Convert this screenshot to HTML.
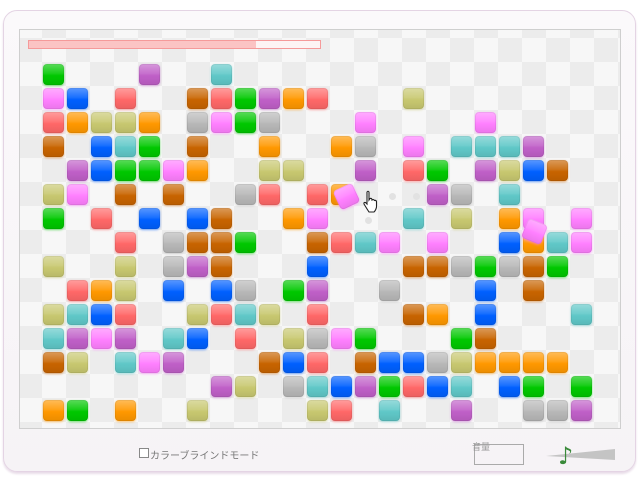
<!DOCTYPE html>
<html><head><meta charset="utf-8"><style>
html,body{margin:0;padding:0;}
body{width:640px;height:485px;background:#fff;position:relative;overflow:hidden;font-family:"Liberation Sans","Noto Sans CJK JP",sans-serif;}
#frame{position:absolute;left:3px;top:10px;width:631px;height:460px;border:1px solid #e4d4e4;border-radius:14px;background:linear-gradient(#fbf9fb,#f6f3f6);box-shadow:0 2px 2px #e8dce8;}
#board{position:absolute;left:19px;top:29px;width:600px;height:398px;border:1px solid #cfcfcf;
background-color:#f7f7f7;
background-image:conic-gradient(#ececec 25%,#f7f7f7 0 50%,#ececec 0 75%,#f7f7f7 0);
background-size:48px 48px;background-position:-2px 32px;overflow:hidden;}
.t{position:absolute;width:21px;height:21px;border-radius:4px;}
#bar{position:absolute;left:28px;top:40px;width:291px;height:7px;border:1px solid #f59a9a;background:linear-gradient(90deg,#fbc4c4 0 78%,#fdf4f4 78%);}
.dot{position:absolute;width:7px;height:7px;border-radius:50%;background:#e2e2e2;}
</style></head><body>
<div id="frame"></div>
<div id="board"></div>
<div id="bar"></div>
<div class="dot" style="left:389px;top:193px"></div>
<div class="dot" style="left:413px;top:193px"></div>
<div class="dot" style="left:365px;top:217px"></div>
<div id="tiles"></div>
<svg style="position:absolute;left:362px;top:190px" width="20" height="24" viewBox="0 0 20 24"><path d="M5 2 Q6 0.5 7 2 L7 10 L8 8.5 Q9.5 8 10 9.5 L10 10 Q11.5 9 12.5 10.5 Q14 10 14.5 11.5 L14.5 17 Q14 20 12 22 L7 22 Q5 19 2 14 Q1.5 12 3.5 12.5 L5 14 Z" fill="#fff" stroke="#222" stroke-width="1.1"/></svg>
<div style="position:absolute;left:139px;top:448px;width:8px;height:8px;border:1px solid #888;background:#fff"></div>
<div style="position:absolute;left:150px;top:447px;font-size:10px;color:#777;white-space:nowrap">カラーブラインドモード</div>
<div style="position:absolute;left:474px;top:444px;width:48px;height:19px;border:1px solid #aaa"></div>
<div style="position:absolute;left:472px;top:440px;font-size:9px;color:#999">音量</div>
<svg style="position:absolute;left:540px;top:440px" width="80" height="30"><polygon points="6,16 75,9 75,20" fill="#c4c4c4"/><text x="18" y="24" font-size="24" fill="#3a8a3a" font-family="DejaVu Sans">♪</text></svg>
<script>
var col={G:'#00c800',P:'#c060c8',K:'#ff80ff',B:'#0060ff',R:'#ff6868',O:'#ff9800',Y:'#c8c870',C:'#60c8c8',N:'#c86400',S:'#b8b8b8'};
var rows=["1G 5P 8C","1K 2B 4R 7N 8R 9G 10P 11O 12R 16Y","1R 2O 3Y 4Y 5O 7S 8K 9G 10S 14K 19K",
"1N 3B 4C 5G 7N 10O 13O 14S 16K 18C 19C 20C 21P","2P 3B 4G 5G 6K 7O 10Y 11Y 14P 16R 17G 19P 20Y 21B 22N",
"1Y 2K 4N 6N 9S 10R 12R 13O 17P 18S 20C","1G 3R 5B 7B 8N 11O 12K 16C 18Y 20O 21K 23K",
"4R 6S 7N 8N 9G 12N 13R 14C 15K 17K 20B 21O 22C 23K","1Y 4Y 6S 7P 8N 12B 16N 17N 18S 19G 20S 21N 22G",
"2R 3O 4Y 6B 8B 9S 11G 12P 15S 19B 21N","1Y 2C 3B 4R 7Y 8R 9C 10Y 12R 16N 17O 19B 23C",
"1C 2P 3K 4P 6C 7B 9R 11Y 12S 13K 14G 18G 19N","1N 2Y 4C 5K 6P 10N 11B 12R 14N 15B 16B 17S 18Y 19O 20O 21O 22O",
"8P 9Y 11S 12C 13B 14P 15G 16R 17B 18C 20B 21G 23G","1O 2G 4O 7Y 12Y 13R 15C 18P 21S 22S 23P"];
var h='';
function tile(x,y,c,extra){return '<div class="t" style="left:'+x+'px;top:'+y+'px;background:linear-gradient(rgba(255,255,255,.35),rgba(255,255,255,.1) 45%,rgba(0,0,0,0) 55%,rgba(0,0,0,.08)),'+c+';box-shadow:0 1px 2px '+c+'88,inset 0 0 0 1px rgba(0,0,0,.06);'+(extra||'')+'"></div>';}
rows.forEach(function(r,ri){r.split(' ').forEach(function(s){var c=parseInt(s),l=s.slice(-1);h+=tile(43+24*(c-1),64+24*ri,col[l]);});});
h+=tile(336,186,col.K,'transform:rotate(-25deg);');
h+=tile(524,221,col.K,'transform:rotate(22deg);');
document.getElementById('tiles').innerHTML=h;
</script>
</body></html>
